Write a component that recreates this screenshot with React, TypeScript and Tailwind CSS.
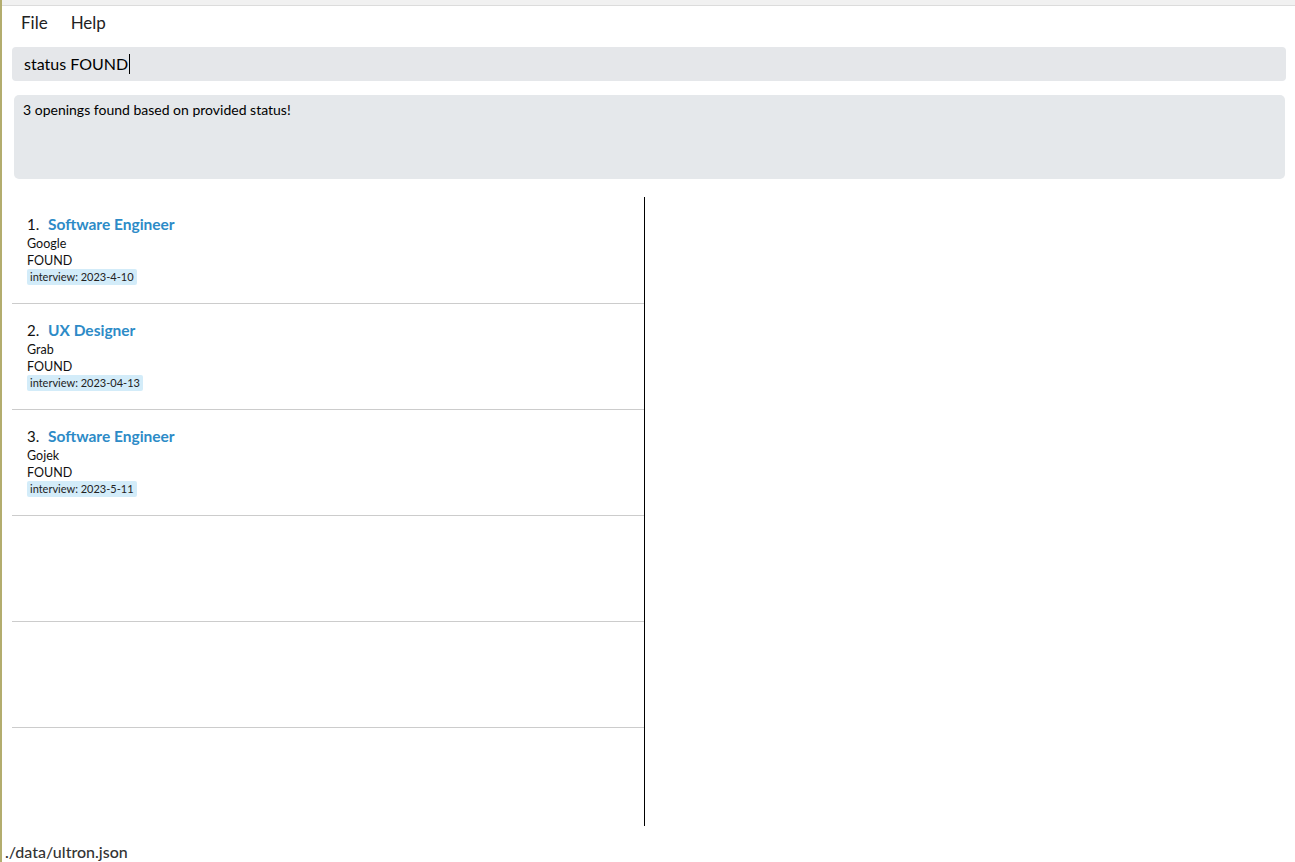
import React from "react";

const items = [
  { n: 1, title: "Software Engineer", company: "Google", status: "FOUND", tag: "interview: 2023-4-10" },
  { n: 2, title: "UX Designer", company: "Grab", status: "FOUND", tag: "interview: 2023-04-13" },
  { n: 3, title: "Software Engineer", company: "Gojek", status: "FOUND", tag: "interview: 2023-5-11" },
];

export default function App() {
  return (
    <div
      className="w-[1295px] h-[862px] bg-white flex flex-col overflow-hidden border-l-2 border-[#b3ad6e] text-black"
      style={{ fontFamily: "Lato, 'Open Sans', sans-serif" }}
    >
      <div className="h-[6px] bg-[#f1f1f1] border-b border-[#dcdcdc] shrink-0" />
      <div className="h-[33px] flex items-center gap-[23px] pl-[19px] text-[17px] text-[#222] shrink-0">
        <span>File</span>
        <span>Help</span>
      </div>
      <div className="ml-[10px] mr-[9px] mt-[8px] h-[34px] rounded-[4px] bg-[#e5e7ea] flex items-center pl-[12px] text-[16px] shrink-0">
        <span>status FOUND</span>
        <span className="w-px h-[20px] bg-black ml-px" />
      </div>
      <div className="ml-[12px] mr-[10px] mt-[14px] h-[84px] rounded-[5px] bg-[#e5e8eb] px-[9px] pt-[4px] text-[14px] shrink-0">
        3 openings found based on provided status!
      </div>
      <div className="flex mt-[18px] h-[629px] shrink-0">
        <div className="w-[633px] ml-[10px] pt-[1px] flex flex-col border-r border-black">
          {[0, 1, 2, 3, 4, 5].map((i) => {
            const it = items[i];
            return (
              <div
                key={i}
                className={`h-[106px] shrink-0 pl-[15px] ${i < 5 ? "border-b border-[#cccccc]" : ""}`}
              >
                {it && (
                  <div className="pt-[15px] flex flex-col">
                    <div className="flex items-baseline h-[22px]">
                      <span className="text-[15px] text-[#111] w-[21px]">{it.n}.</span>
                      <span className="text-[15.5px] font-bold text-[#2d8bc7]">{it.title}</span>
                    </div>
                    <div className="text-[12.5px] leading-[17px] text-[#111]">{it.company}</div>
                    <div className="text-[12.5px] leading-[17px] text-[#111]">{it.status}</div>
                    <div className="flex">
                      <span className="bg-[#d3ecf9] rounded-[2px] px-[3px] text-[11px] leading-[16px] text-[#222]">
                        {it.tag}
                      </span>
                    </div>
                  </div>
                )}
              </div>
            );
          })}
        </div>
        <div className="flex-1" />
      </div>
      <div className="pl-[3px] mt-[14px] text-[16px] font-medium text-[#333]">./data/ultron.json</div>
    </div>
  );
}
